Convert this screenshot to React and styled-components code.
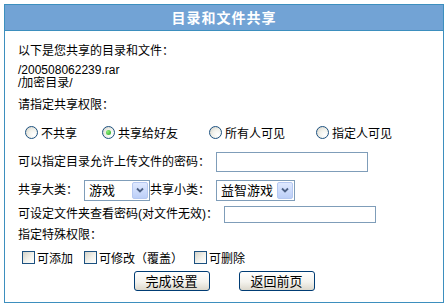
import React from "react";
import styled, { createGlobalStyle } from "styled-components";

const Global = createGlobalStyle`
  body {
    margin: 0;
    background: #fff;
    color: #000;
    font-family: "Liberation Sans", "Noto Sans CJK SC", sans-serif;
    font-size: 12px;
  }
`;

const Panel = styled.div`
  margin: 4px;
  width: 440px;
  height: 299px;
  box-sizing: border-box;
  border: 1px solid #3d8fbe;
  display: flex;
  flex-direction: column;
`;

const Header = styled.div`
  height: 25px;
  line-height: 25px;
  background: #72a3d5;
  border-bottom: 1px solid #3d8fbe;
  color: #fff;
  font-family: "Noto Sans CJK SC", sans-serif;
  font-weight: bold;
  font-size: 14px;
  letter-spacing: 1px;
  text-align: center;
`;

const Body = styled.div`
  padding-left: 13px;
  display: flex;
  flex-direction: column;
`;

const Line = styled.div`
  margin-top: ${(p) => p.$mt || 0}px;
  height: ${(p) => p.$h || 20}px;
  line-height: ${(p) => p.$h || 20}px;
  display: flex;
  align-items: center;
  white-space: nowrap;
`;

const RadioRow = styled.div`
  margin-top: 7px;
  height: 20px;
  padding-left: 7px;
  display: grid;
  grid-template-columns: 77px 107px 107px auto;
  align-items: center;
`;

const Choice = styled.label`
  display: flex;
  align-items: center;
  gap: 3px;
  white-space: nowrap;
`;

const Radio = styled.span`
  width: 13px;
  height: 13px;
  box-sizing: border-box;
  border-radius: 50%;
  border: 1px solid #1c5180;
  background: radial-gradient(circle at 70% 70%, #fff 0%, #f2f2ec 45%, #d2d0c6 100%);
  display: flex;
  align-items: center;
  justify-content: center;
  &::after {
    content: "";
    display: ${(p) => (p.$on ? "block" : "none")};
    width: 5px;
    height: 5px;
    border-radius: 50%;
    background: radial-gradient(circle at 35% 35%, #8ef07a, #21a121);
  }
`;

const TextBox = styled.input`
  margin-left: 6px;
  width: ${(p) => p.$w}px;
  height: ${(p) => p.$h}px;
  box-sizing: border-box;
  border: 1px solid #7f9db9;
  padding: 0;
  background: #fff;
`;

const Select = styled.div`
  margin-left: 6px;
  width: ${(p) => p.$w}px;
  height: 21px;
  box-sizing: border-box;
  border: 1px solid #7f9db9;
  padding: 0 1px 0 4px;
  display: flex;
  align-items: center;
  justify-content: space-between;
  font-family: "Noto Sans CJK SC", sans-serif;
  font-size: 13px;
  background: #fff;
`;

const DropButton = styled.span`
  width: 16px;
  height: 17px;
  box-sizing: border-box;
  border: 1px solid #b5c8f1;
  border-radius: 2px;
  background: linear-gradient(#dfe9ff, #bccff8);
  display: flex;
  align-items: center;
  justify-content: center;
`;

const CheckRow = styled.div`
  margin-top: 2px;
  height: 20px;
  padding-left: 4px;
  display: flex;
  align-items: center;
`;

const CheckItem = styled.label`
  display: flex;
  align-items: center;
  gap: 2px;
  margin-right: 11px;
  white-space: nowrap;
`;

const Box = styled.span`
  width: 13px;
  height: 13px;
  box-sizing: border-box;
  border: 1px solid #1c5180;
  background: linear-gradient(135deg, #d4d2c8 0%, #f2f2ec 55%, #fff 100%);
`;

const ButtonRow = styled.div`
  margin-top: 4px;
  margin-left: -13px;
  display: flex;
  justify-content: center;
  gap: 29px;
`;

const Button = styled.button`
  width: 76px;
  height: 20px;
  padding: 0;
  box-sizing: border-box;
  border: 1px solid #003c74;
  border-radius: 3px;
  background: linear-gradient(#ffffff 0%, #f4f3ee 55%, #dcd8cc 100%);
  font-family: "Noto Sans CJK SC", sans-serif;
  font-size: 13px;
  line-height: 18px;
  color: #000;
`;

const Chevron = () => (
  <svg width="8" height="6" viewBox="0 0 8 6">
    <path d="M1 1.5 L4 4.5 L7 1.5" fill="none" stroke="#4d6185" strokeWidth="1.8" />
  </svg>
);

const Dropdown = ({ w, value }) => (
  <Select $w={w}>
    <span>{value}</span>
    <DropButton>
      <Chevron />
    </DropButton>
  </Select>
);

const shareOptions = [
  { label: "不共享" },
  { label: "共享给好友", on: true },
  { label: "所有人可见" },
  { label: "指定人可见" },
];

const App = () => (
  <>
    <Global />
    <Panel>
      <Header>目录和文件共享</Header>
      <Body>
        <Line $mt={10}>以下是您共享的目录和文件：</Line>
        <Line $mt={3} $h={13}>/200508062239.rar</Line>
        <Line $h={13}>/加密目录/</Line>
        <Line $mt={5}>请指定共享权限：</Line>
        <RadioRow>
          {shareOptions.map((o) => (
            <Choice key={o.label}>
              <Radio $on={o.on} />
              {o.label}
            </Choice>
          ))}
        </RadioRow>
        <Line $mt={10}>
          可以指定目录允许上传文件的密码：
          <TextBox $w={152} $h={20} />
        </Line>
        <Line $mt={7} $h={22}>
          共享大类：
          <Dropdown w={66} value="游戏" />
          共享小类：
          <Dropdown w={79} value="益智游戏" />
        </Line>
        <Line $mt={4} $h={18}>
          可设定文件夹查看密码(对文件无效)：
          <TextBox $w={152} $h={17} />
        </Line>
        <Line $mt={2}>指定特殊权限：</Line>
        <CheckRow>
          <CheckItem><Box />可添加</CheckItem>
          <CheckItem><Box />可修改（覆盖）</CheckItem>
          <CheckItem><Box />可删除</CheckItem>
        </CheckRow>
        <ButtonRow>
          <Button>完成设置</Button>
          <Button>返回前页</Button>
        </ButtonRow>
      </Body>
    </Panel>
  </>
);

export default App;
